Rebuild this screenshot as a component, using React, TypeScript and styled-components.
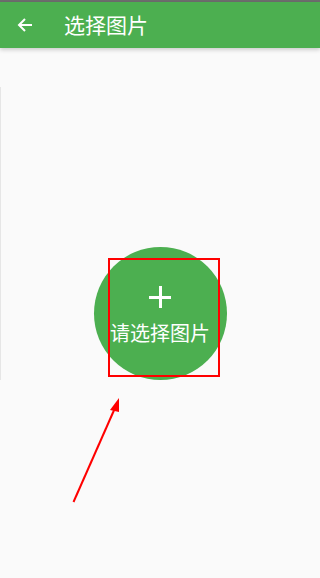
import React from "react";
import styled, { createGlobalStyle } from "styled-components";

const Global = createGlobalStyle`
  html, body { margin: 0; padding: 0; background: #fafafa; }
  body { font-family: Roboto, "Noto Sans CJK SC", sans-serif; }
`;

const Screen = styled.div`
  width: 320px;
  height: 578px;
  background: #fafafa;
  display: flex;
  flex-direction: column;
  position: relative;
  overflow: hidden;
`;

const StatusLine = styled.div`
  height: 2px;
  background: #6d6d6d;
`;

const Toolbar = styled.div`
  height: 46px;
  background: #4caf50;
  display: flex;
  align-items: center;
  box-shadow: 0 2px 4px rgba(0, 0, 0, 0.18);
  position: relative;
  z-index: 1;
`;

const BackButton = styled.div`
  width: 50px;
  height: 46px;
  display: flex;
  align-items: center;
  justify-content: center;
`;

const Title = styled.div`
  margin-left: 14px;
  color: #ffffff;
  font-family: "Noto Sans CJK SC", sans-serif;
  font-size: 21px;
  line-height: 46px;
  margin-top: -2px;
`;

const Body = styled.div`
  flex: 1;
  position: relative;
  display: flex;
  justify-content: center;
`;

const SideLine = styled.div`
  position: absolute;
  left: 0;
  top: 39px;
  width: 1px;
  height: 293px;
  background: #e6e6e6;
`;

const Picker = styled.div`
  margin-top: 199px;
  width: 133px;
  height: 133px;
  border-radius: 50%;
  background: #4caf50;
  display: flex;
  flex-direction: column;
  align-items: center;
  position: relative;
`;

const Plus = styled.div`
  margin-top: 39px;
  width: 22px;
  height: 22px;
  position: relative;
  &::before, &::after {
    content: "";
    position: absolute;
    background: #ffffff;
  }
  &::before { left: 0; right: 0; top: 9.5px; height: 3px; }
  &::after { top: 0; bottom: 0; left: 9.5px; width: 3px; }
`;

const Label = styled.div`
  margin-top: 13px;
  color: #ffffff;
  font-family: "Noto Sans CJK SC", sans-serif;
  font-size: 20px;
  line-height: 24px;
  white-space: nowrap;
`;

const Highlight = styled.div`
  position: absolute;
  left: 108px;
  top: 258px;
  width: 108px;
  height: 115px;
  border: 2px solid #ff0000;
  pointer-events: none;
`;

const Arrow = styled.svg`
  position: absolute;
  left: 0;
  top: 0;
  pointer-events: none;
`;

export default function App() {
  return (
    <>
      <Global />
      <Screen>
        <StatusLine />
        <Toolbar>
          <BackButton>
            <svg width="16" height="16" viewBox="0 0 16 16">
              <path d="M15 8H2.5M8 2 2 8l6 6" fill="none" stroke="#fff" strokeWidth="2" />
            </svg>
          </BackButton>
          <Title>选择图片</Title>
        </Toolbar>
        <Body>
          <SideLine />
          <Picker>
            <Plus />
            <Label>请选择图片</Label>
          </Picker>
        </Body>
        <Highlight />
        <Arrow width="320" height="578" viewBox="0 0 320 578">
          <line x1="73.5" y1="502" x2="115" y2="408" stroke="#ff0000" strokeWidth="2" />
          <polygon points="119,398 110,410 119,412" fill="#ff0000" />
        </Arrow>
      </Screen>
    </>
  );
}
